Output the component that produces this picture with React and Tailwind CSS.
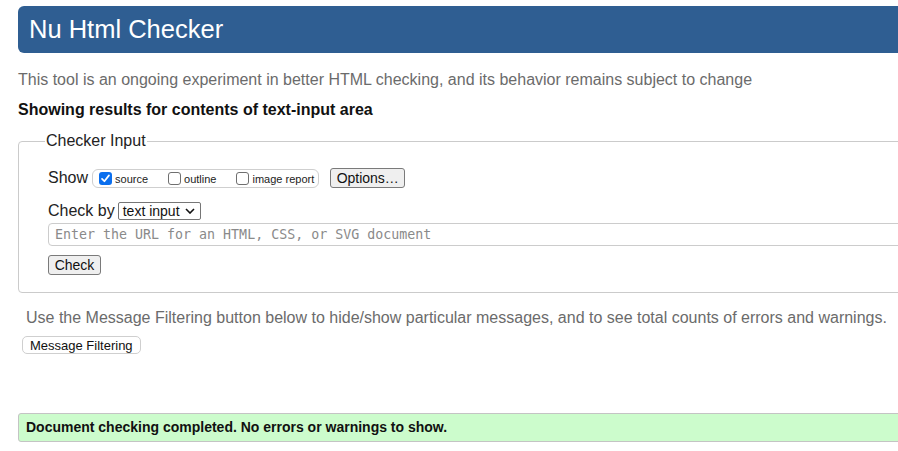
import React from 'react';

const Box = ({ checked }) =>
  checked ? (
    <span className="inline-flex h-[13px] w-[13px] items-center justify-center rounded-[3px] bg-[#0b6fee]">
      <svg viewBox="0 0 12 12" className="h-[11px] w-[11px]">
        <path d="M2.2 6.4 L4.8 9 L9.8 2.6" fill="none" stroke="#fff" strokeWidth="1.9" strokeLinecap="round" strokeLinejoin="round" />
      </svg>
    </span>
  ) : (
    <span className="inline-block h-[13px] w-[13px] rounded-[3px] border border-[#6f6f6f] bg-white" />
  );

const App = () => {
  return (
    <div className="w-[898px] h-[451px] overflow-hidden bg-white font-['Liberation_Sans',Arial,sans-serif] text-[#222]">
      <div className="w-[960px] pl-[18px]">
        {/* Header */}
        <div className="mt-[6px] flex h-[47px] items-center rounded-l-[6px] bg-[#2f5e92] pl-[11px]">
          <h1 className="text-[25.5px] leading-none text-white">Nu Html Checker</h1>
        </div>

        <p className="mt-[18px] text-[16px] leading-[18px] text-[#6b6b6b]">
          This tool is an ongoing experiment in better HTML checking, and its behavior remains subject to change
        </p>
        <p className="mt-[12px] text-[16px] font-bold leading-[18px] text-[#111]">
          Showing results for contents of text-input area
        </p>

        {/* Checker input */}
        <fieldset className="mt-[12px] rounded-l-[4px] border border-[#cbcbcb] pl-[29px] pb-[17px]">
          <legend className="-ml-[3px] px-[1px] text-[16px] leading-[20px] text-[#222]">Checker Input</legend>

          <div className="mt-[17px] flex h-[20px] items-center">
            <span className="text-[16px]">Show</span>
            <div className="ml-[4px] flex h-[19px] items-center rounded-[6px] border border-[#cfcfcf] pl-[6px] pr-[4px] text-[11px]">
              <label className="flex items-center">
                <Box checked />
                <span className="ml-[3px] mt-[2px]">source</span>
              </label>
              <label className="ml-[20px] flex items-center">
                <Box />
                <span className="ml-[3px] mt-[2px]">outline</span>
              </label>
              <label className="ml-[20px] flex items-center">
                <Box />
                <span className="ml-[3px] mt-[2px]">image report</span>
              </label>
            </div>
            <button className="ml-[11px] h-[20px] w-[75px] rounded-[3px] border border-[#7a7a7a] bg-[#efefef] text-[14px] leading-none text-[#111]">
              Options…
            </button>
          </div>

          <div className="mt-[14px] flex h-[18px] items-center">
            <span className="text-[16px]">Check by</span>
            <span className="ml-[3px] flex h-[18px] w-[83px] items-center justify-between rounded-[2px] border border-[#767676] bg-white pl-[4px] pr-[5px] text-[14px] leading-none text-[#111]">
              text input
              <svg viewBox="0 0 10 6" className="h-[6px] w-[10px]">
                <path d="M1 1 L5 5 L9 1" fill="none" stroke="#111" strokeWidth="1.6" />
              </svg>
            </span>
          </div>

          <input
            className="mt-[3px] block h-[23px] w-full rounded-l-[4px] border border-[#cccccc] pl-[6px] font-['DejaVu_Sans_Mono',monospace] text-[13.3px] text-[#333] outline-none placeholder:text-[#8a8a8a]"
            placeholder="Enter the URL for an HTML, CSS, or SVG document"
          />

          <button className="mt-[9px] block h-[20px] w-[53px] rounded-[3px] border border-[#7a7a7a] bg-[#efefef] text-[14px] leading-none text-[#111]">
            Check
          </button>
        </fieldset>

        <p className="ml-[8px] mt-[16px] text-[16px] leading-[18px] text-[#6b6b6b]">
          Use the Message Filtering button below to hide/show particular messages, and to see total counts of errors and warnings.
        </p>
        <button className="ml-[4px] mt-[9px] block h-[18px] rounded-[5px] border border-[#cfcfcf] bg-white px-[7px] text-[13px] leading-none text-[#111]">
          Message Filtering
        </button>

        <div className="mt-[59px] flex h-[29px] items-center rounded-l-[3px] border border-[#c4c4c4] bg-[#ccfccc] pl-[7px]">
          <span className="text-[14px] font-bold text-[#111]">Document checking completed. No errors or warnings to show.</span>
        </div>
      </div>
    </div>
  );
};

export default App;
